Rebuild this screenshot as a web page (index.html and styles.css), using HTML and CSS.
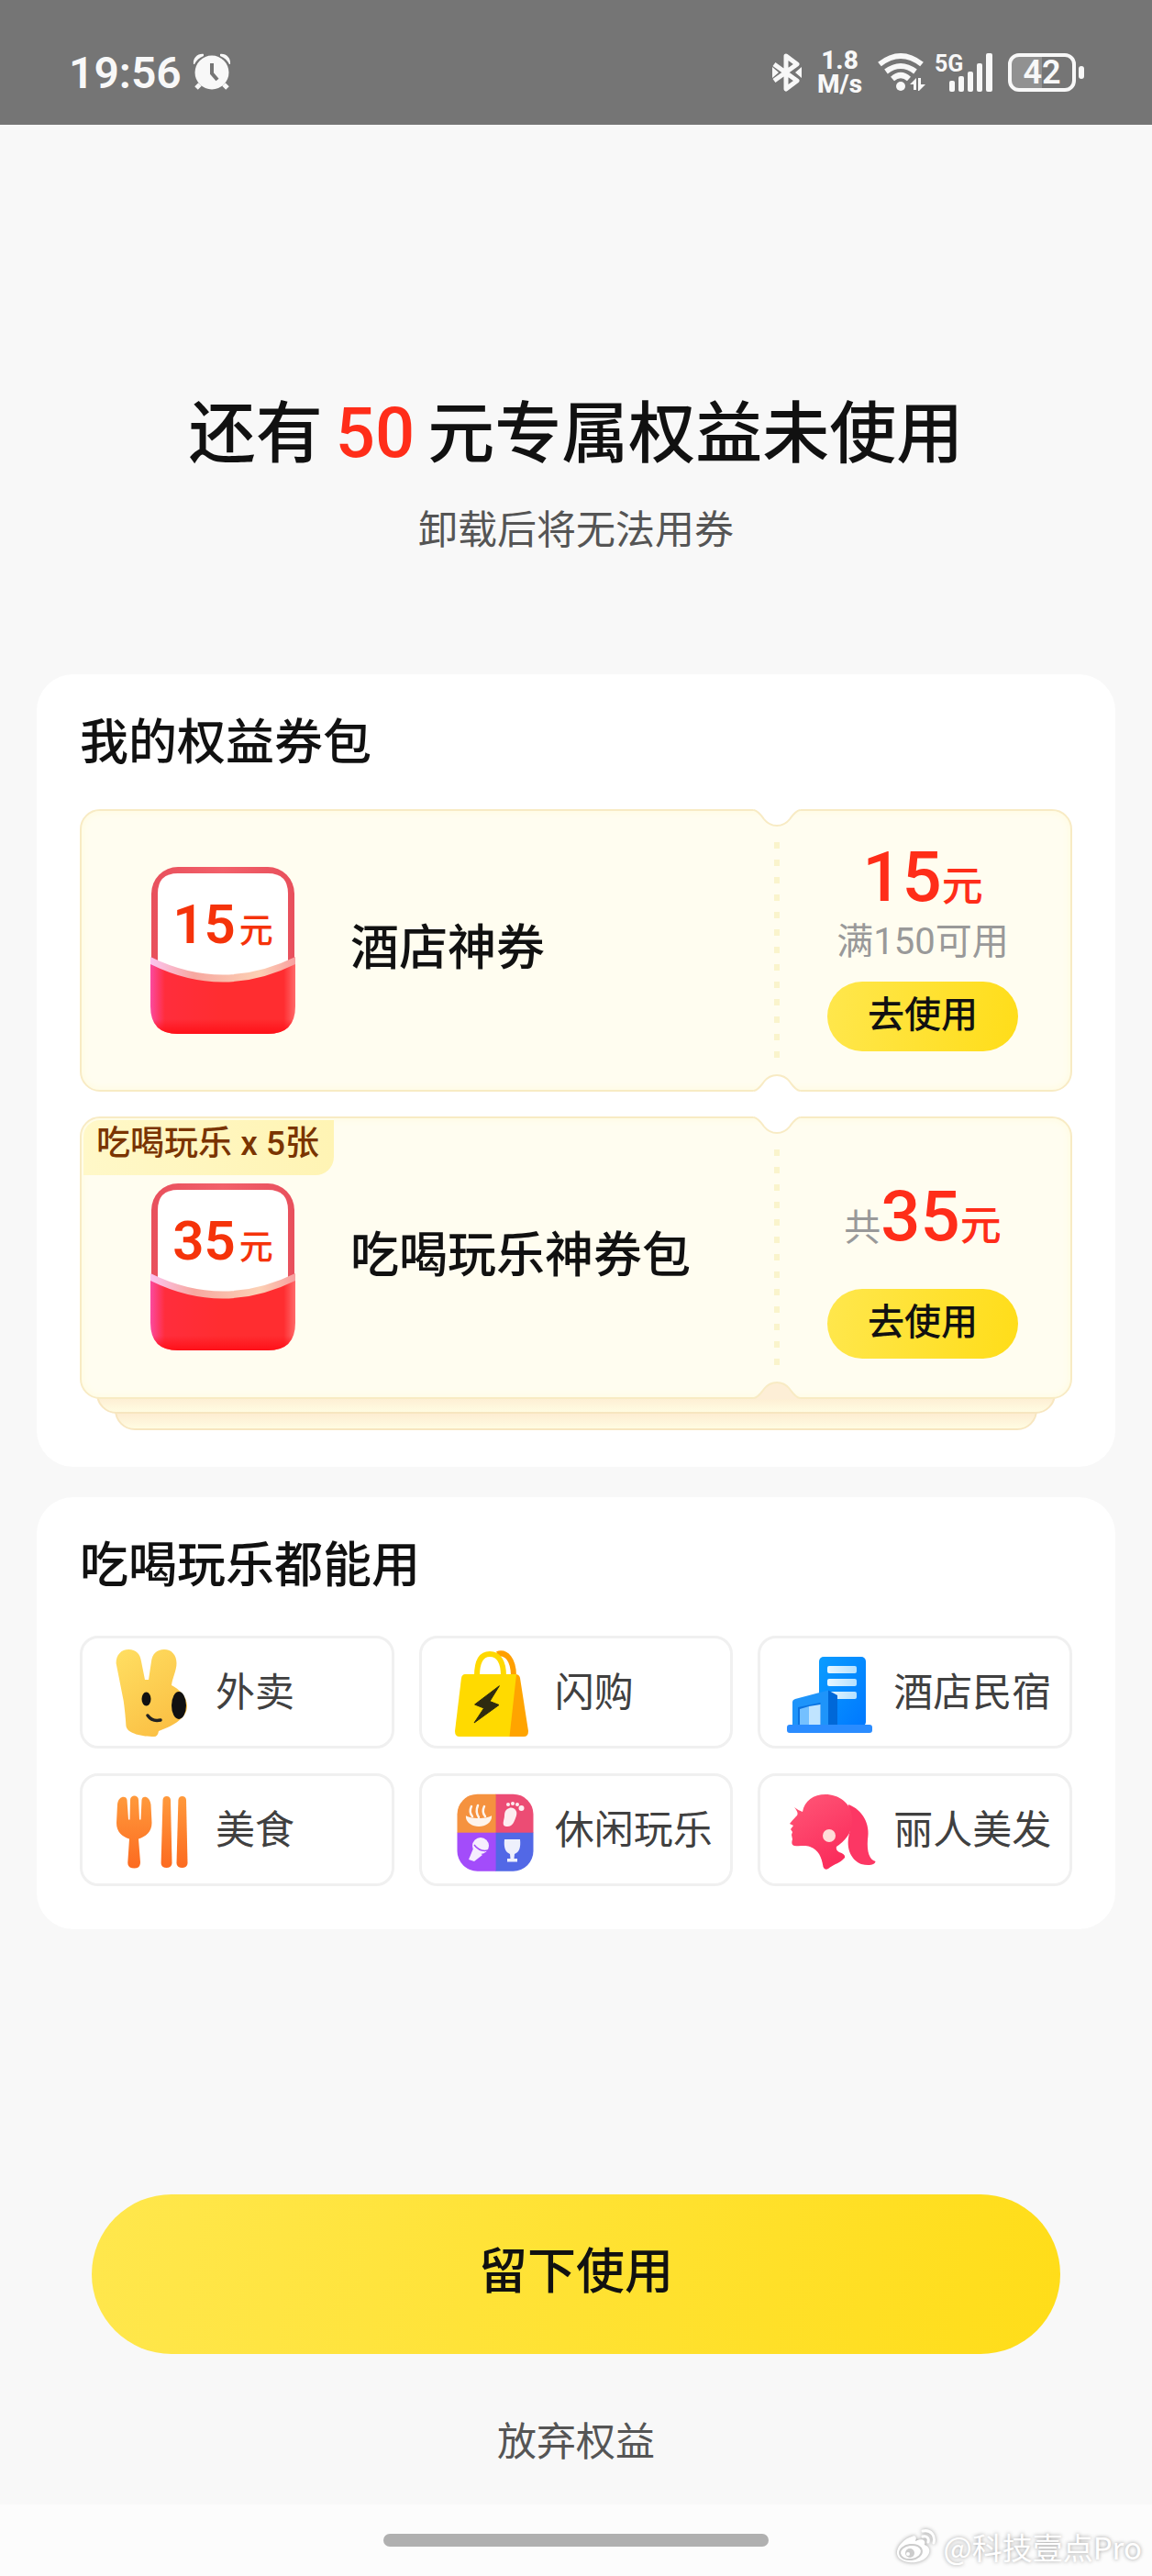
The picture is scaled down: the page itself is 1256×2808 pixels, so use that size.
FILE: index.html
```html
<!DOCTYPE html>
<html lang="zh-CN">

<head>
  <meta charset="UTF-8">
  <meta name="viewport" content="width=device-width, initial-scale=1.0">
  <title>专属权益</title>
  <link rel="stylesheet" href="styles.css">
</head>

<body>
  <div class="status-bar">
    <div class="status-left">
      <span class="time">19:56</span>
      <svg width="42" height="42" viewBox="0 0 42 42" fill="#f8f8f8">
        <circle cx="21" cy="21" r="18.5" />
        <path d="M1 12C0 5 6 0 12 1L12 3C7 5 4 8 2 12Z" />
        <path d="M41 12C42 5 36 0 30 1L30 3C35 5 38 8 40 12Z" />
        <path d="M8 34L4 38M34 34L38 38" stroke="#f8f8f8" stroke-width="5" />
        <path d="M21 11V22L27 29" fill="none" stroke="#757575" stroke-width="4" />
      </svg>
    </div>
    <div class="status-right">
      <svg width="32" height="42" viewBox="0 0 32 42">
        <path d="M2 12L27 30L15 39V3L27 12L2 30" fill="none" stroke="#f8f8f8" stroke-width="5" stroke-linejoin="round" />
        <path d="M0 15L7 21L0 27ZM32 15L25 21L32 27Z" fill="#f8f8f8" />
      </svg>
      <p class="speed">1.8<br>M/s</p>
      <svg class="wifi" width="52" height="42" viewBox="0 0 52 42">
        <g fill="none" stroke="#f8f8f8" stroke-width="6">
          <path d="M2 12Q25 -6 48 12" />
          <path d="M9 20Q25 8 41 20" />
          <path d="M16 28Q25 20 34 28" />
        </g>
        <circle cx="25" cy="36" r="5" fill="#f8f8f8" />
        <path d="M35 34L42 27V40H39V34ZM44 27H47V34H52L45 41H44Z" fill="#f8f8f8" />
      </svg>
      <svg class="signal" width="62" height="42" viewBox="0 0 62 42" fill="#f8f8f8">
        <text class="signal-text" x="-1" y="20">5G</text>
        <rect x="15" y="30" width="6" height="12" rx="2" />
        <rect x="25" y="25" width="6" height="17" rx="2" />
        <rect x="35" y="20" width="6" height="22" rx="2" />
        <rect x="45" y="11" width="6" height="31" rx="2" />
        <rect x="55" y="0" width="7" height="42" rx="2" />
      </svg>
      <div class="battery">
        <span class="battery-level">42</span>
      </div>
    </div>
  </div>

  <header class="header">
    <h1>还有<span class="amount">50</span>元专属权益未使用</h1>
    <p>卸载后将无法用券</p>
  </header>

  <main class="main">
    <section class="card">
      <h2>我的权益券包</h2>

      <div class="ticket">
        <svg class="notch notch-top" viewBox="0 0 52 20">
          <path class="notch-fill" d="M0 0L2 1C6 2 9 7 12 11C16 16 21 18 26 18C31 18 36 16 40 11C43 7 46 2 50 1L52 0Z" />
          <path class="notch-line" d="M1 1C6 2 9 7 12 11C16 16 21 18 26 18C31 18 36 16 40 11C43 7 46 2 51 1" />
        </svg>
        <svg class="notch notch-bottom" viewBox="0 0 52 20">
          <path class="notch-fill" d="M0 0L2 1C6 2 9 7 12 11C16 16 21 18 26 18C31 18 36 16 40 11C43 7 46 2 50 1L52 0Z" />
          <path class="notch-line" d="M1 1C6 2 9 7 12 11C16 16 21 18 26 18C31 18 36 16 40 11C43 7 46 2 51 1" />
        </svg>
        <div class="ticket-info">
          <div class="packet">
            <svg width="158" height="182" viewBox="0 0 158 182">
              <defs>
                <linearGradient id="rim" x1="0" x2="1">
                  <stop offset="0" stop-color="#e8505c" />
                  <stop offset="0.5" stop-color="#f2606a" />
                  <stop offset="1" stop-color="#e8505c" />
                </linearGradient>
                <linearGradient id="pocket" x1="0" x2="1">
                  <stop offset="0" stop-color="#fb4aa0" />
                  <stop offset="0.1" stop-color="#ff2d3c" />
                  <stop offset="0.5" stop-color="#ff2d30" />
                  <stop offset="0.92" stop-color="#ff2d30" />
                  <stop offset="1" stop-color="#ff6a6a" />
                </linearGradient>
                <linearGradient id="shade" x1="0" x2="0" y1="0" y2="1">
                  <stop offset="0.8" stop-color="#ff1018" stop-opacity="0" />
                  <stop offset="1" stop-color="#ff1018" />
                </linearGradient>
                <linearGradient id="lip" x1="0" x2="1">
                  <stop offset="0" stop-color="#fbc4f0" />
                  <stop offset="0.3" stop-color="#f7a8a0" />
                  <stop offset="0.75" stop-color="#fcd0b4" />
                  <stop offset="1" stop-color="#f8a0a0" />
                </linearGradient>
              </defs>
              <rect x="1" width="156" height="150" rx="29" fill="url(#rim)" />
              <path d="M8 29Q8 7 30 7H128Q150 7 150 29V120H8Z" fill="#fff" />
              <path d="M0 102Q79 142 158 102V152Q158 182 128 182H30Q0 182 0 152Z" fill="url(#pocket)" />
              <path d="M0 102Q79 142 158 102V152Q158 182 128 182H30Q0 182 0 152Z" fill="url(#shade)" />
              <path d="M0 98Q79 137 158 98V106Q79 145 0 106Z" fill="url(#lip)" />
            </svg>
            <span class="packet-text">15<small>元</small></span>
          </div>
          <h3>酒店神券</h3>
        </div>
        <div class="ticket-side">
          <p class="price">15<small>元</small></p>
          <p class="condition">满150可用</p>
          <button class="use">去使用</button>
        </div>
      </div>

      <div class="stack">
        <div class="ticket">
          <svg class="notch notch-top" viewBox="0 0 52 20">
            <path class="notch-fill" d="M0 0L2 1C6 2 9 7 12 11C16 16 21 18 26 18C31 18 36 16 40 11C43 7 46 2 50 1L52 0Z" />
            <path class="notch-line" d="M1 1C6 2 9 7 12 11C16 16 21 18 26 18C31 18 36 16 40 11C43 7 46 2 51 1" />
          </svg>
          <svg class="notch notch-bottom" viewBox="0 0 52 20">
            <path class="notch-peach" d="M0 0L2 1C6 2 9 7 12 11C16 16 21 18 26 18C31 18 36 16 40 11C43 7 46 2 50 1L52 0Z" />
            <path class="notch-line" d="M1 1C6 2 9 7 12 11C16 16 21 18 26 18C31 18 36 16 40 11C43 7 46 2 51 1" />
          </svg>
          <span class="tag">吃喝玩乐 x 5张</span>
          <div class="ticket-info has-tag">
            <div class="packet">
              <svg width="158" height="182" viewBox="0 0 158 182">
                <rect x="1" width="156" height="150" rx="29" fill="url(#rim)" />
                <path d="M8 29Q8 7 30 7H128Q150 7 150 29V120H8Z" fill="#fff" />
                <path d="M0 102Q79 142 158 102V152Q158 182 128 182H30Q0 182 0 152Z" fill="url(#pocket)" />
                <path d="M0 102Q79 142 158 102V152Q158 182 128 182H30Q0 182 0 152Z" fill="url(#shade)" />
                <path d="M0 98Q79 137 158 98V106Q79 145 0 106Z" fill="url(#lip)" />
              </svg>
              <span class="packet-text">35<small>元</small></span>
            </div>
            <h3>吃喝玩乐神券包</h3>
          </div>
          <div class="ticket-side">
            <p class="price total"><span class="prefix">共</span>35<small>元</small></p>
            <button class="use">去使用</button>
          </div>
        </div>
        <div class="layer layer-1"></div>
        <div class="layer layer-2"></div>
      </div>
    </section>

    <section class="card">
      <h2>吃喝玩乐都能用</h2>
      <div class="services">
        <a href="#" class="service">
          <svg viewBox="0 0 90 100">
            <defs>
              <linearGradient id="bunny" x1="0" x2="0.6" y1="0" y2="1">
                <stop offset="0" stop-color="#ffdf62" />
                <stop offset="1" stop-color="#fbc044" />
              </linearGradient>
            </defs>
            <path d="M6.600 18C6.600 9 12 3 20.400 3C28 3 33 8 34 16L38 36H42L45 16C46 8 51 3 59 3C67 3 72.500 9 72.500 18C72.500 26 68 34 67 42C75 46 84 54 84 65C84 77 70 86 53 92Q52 98 48 98C36 98 18 95 17.400 86C17 78 16 68 14.700 59Z" fill="url(#bunny)" />
            <ellipse cx="39.500" cy="57" rx="5" ry="7.500" fill="#111" />
            <ellipse cx="75" cy="64" rx="8" ry="15" fill="#111" />
            <path d="M41 75Q46 82 55 80" fill="none" stroke="#222" stroke-width="3.500" stroke-linecap="round" />
          </svg>
          <span>外卖</span>
        </a>
        <a href="#" class="service">
          <svg viewBox="0 0 90 100">
            <path d="M52 8C62 5 70 14 70 32" fill="none" stroke="#ff9f00" stroke-width="6" />
            <path d="M30 32C30 14 36 8 44 8C53 8 59 16 59 32" fill="none" stroke="#ffd900" stroke-width="6" />
            <path d="M65 30H72Q76 30 77 34L86 92Q86 98 81 98H62Z" fill="#ffa400" />
            <path d="M17 30H73L65.500 98H11Q6 98 6 92L13 34Q14 30 17 30Z" fill="#ffda00" />
            <path d="M54.400 42.700L27.600 63L37.600 67L27 83L54 63.500L44 59.500Z" fill="#2e2a10" stroke="#2e2a10" stroke-linejoin="round" />
          </svg>
          <span>闪购</span>
        </a>
        <a href="#" class="service">
          <svg viewBox="0 0 90 100">
            <defs>
              <linearGradient id="tower" x1="0" x2="1" y1="0" y2="1">
                <stop offset="0" stop-color="#0a9cff" />
                <stop offset="1" stop-color="#0078ff" />
              </linearGradient>
              <linearGradient id="pane" x1="0" x2="1">
                <stop offset="0" stop-color="#e8f7ff" />
                <stop offset="1" stop-color="#b4e0ff" />
              </linearGradient>
            </defs>
            <rect x="34" y="11" width="51" height="76" rx="5" fill="url(#tower)" />
            <rect x="43" y="21" width="32" height="8" rx="2" fill="url(#pane)" />
            <rect x="43" y="35" width="32" height="8" rx="2" fill="url(#pane)" />
            <rect x="43" y="49" width="32" height="8" rx="2" fill="url(#pane)" />
            <path d="M44 47.500L54 53V86H44Z" fill="#0068d8" />
            <path d="M5 60Q5 58 8 57L44 47.500V86H5Z" fill="#1e94fa" />
            <path d="M11 66L35.500 61V86H11Z" fill="#0a72e0" />
            <path d="M13 68L23 65V86H13Z" fill="#74c0ff" />
            <path d="M23 65L35.500 63V86H23Z" fill="#c0e4ff" />
            <rect x="-1" y="85" width="93" height="9" rx="3" fill="#2a8cff" />
          </svg>
          <span>酒店民宿</span>
        </a>
        <a href="#" class="service">
          <svg viewBox="0 0 90 100">
            <defs>
              <linearGradient id="food" x1="0" x2="0" y1="12" y2="92" gradientUnits="userSpaceOnUse">
                <stop offset="0" stop-color="#ff9a3c" />
                <stop offset="1" stop-color="#fc6a20" />
              </linearGradient>
            </defs>
            <g fill="url(#food)">
              <path d="M8 22C9 12 18 12 18.500 17L20 38.500H21.500L22 17C22 11 31 11 31 17L32 38.500H33.500L34.500 17C35 12 43 12 44.500 22L45.500 42C45.500 52 39 57 31 59.500L33 85Q33 91.500 26.500 91.500Q19 91.500 19.300 85L21 59.500C13 57 7 52 7 42Z" />
              <path d="M57.500 17Q58 13 61.700 13Q65.500 13 66 17L67.500 86Q67 91 61.500 91Q56 91 55.600 86Z" />
              <path d="M74.400 17Q75 13 78.600 13Q82.500 13 83 17L84.500 86Q84 91 78.500 91Q73 91 72.500 86Z" />
            </g>
          </svg>
          <span>美食</span>
        </a>
        <a href="#" class="service">
          <svg viewBox="0 0 90 100">
            <defs>
              <clipPath id="tile">
                <rect x="8.500" y="10.700" width="83" height="84" rx="22" />
              </clipPath>
            </defs>
            <g clip-path="url(#tile)">
              <rect x="8" y="10" width="43" height="43" fill="#f5923f" />
              <rect x="50.600" y="10" width="42" height="43" fill="#ec4c74" />
              <rect x="8" y="52.700" width="43" height="43" fill="#a34cfa" />
              <rect x="50.600" y="52.700" width="42" height="43" fill="#5268e6" />
            </g>
            <g fill="#fff" opacity="0.9">
              <path d="M18 34C22 38 42 38 46 34C47 41 40 46 32 46C24 46 17 41 18 34Z" />
              <path d="M25 35Q21 30 24 24M32 36Q28 30 31 23M39 35Q35 30 38 24" fill="none" stroke="#fff" stroke-width="2.500" stroke-linecap="round" />
              <path d="M63 27C68 23 75 27 73 34C71 40 69 47 62 46C56 45 60 39 60 34Q60 29 63 27Z" />
              <circle cx="64" cy="22" r="2" />
              <circle cx="69" cy="21" r="2" />
              <circle cx="74" cy="22" r="2" />
              <circle cx="78.500" cy="26" r="3" />
              <circle cx="34" cy="67" r="9" />
              <path d="M26 70L36 77L27 84L21 82Z" />
              <path d="M60 60H77C78 69 76 74 71 76L70.500 81H74V84.500H63V81H66.500L66 76C61 74 59 69 60 60Z" />
            </g>
            <path d="M27 66Q33 74 42 72" fill="none" stroke="#a34cfa" stroke-width="1.500" />
          </svg>
          <span>休闲玩乐</span>
        </a>
        <a href="#" class="service">
          <svg viewBox="0 0 90 100">
            <defs>
              <linearGradient id="lady" x1="0" x2="0.500" y1="0" y2="1">
                <stop offset="0" stop-color="#ff5878" />
                <stop offset="1" stop-color="#fb2d5c" />
              </linearGradient>
            </defs>
            <path d="M66 22C82 28 90 44 87 60C86 74 89 82 95.500 84C95 88 88 89 80 87C68 82 62 68 68 50Z" fill="#fc3764" />
            <path d="M41 11C55 11 69 20 70 36C72 52 62 62 53 68Q52 72 56 74Q63 76 62 80C57 86 50 87 44 92Q40 94 38.500 90C37 80 34 72 24 68C18 66 14 68 7 67Q3 66 5 60L4 55L5 52L3 49L6 45L2 43C6 38 8 36 10 34Q12 31 7 25Q12 29 16 30C18 18 28 11 41 11Z" fill="url(#lady)" />
            <circle cx="45" cy="56" r="7" fill="#ffdcd8" />
          </svg>
          <span>丽人美发</span>
        </a>
      </div>
    </section>
  </main>

  <footer class="footer">
    <button class="stay">留下使用</button>
    <a href="#" class="leave">放弃权益</a>
  </footer>

  <div class="nav-bar">
    <div class="handle"></div>
    <div class="watermark">
      <svg width="46" height="40" viewBox="0 0 46 40">
        <path d="M18 9C22 7 24 10 22 14C28 11 34 12 32 18C37 20 39 24 36 29C32 36 22 38 15 37C6 36 1 31 2 25C3 18 11 11 18 9Z" fill="#fff" />
        <ellipse cx="17" cy="26" rx="12" ry="8" fill="none" stroke="#ccc" stroke-width="2" transform="rotate(-8 17 26)" />
        <circle cx="16" cy="27" r="5" fill="#ccc" />
        <circle cx="14" cy="28" r="2" fill="#fff" />
        <path d="M30 3C39 1 44 8 42 16M30 9C35 8 37 11 36 15" fill="none" stroke="#fff" stroke-width="3" stroke-linecap="round" />
      </svg>
      <span>@科技壹点Pro</span>
    </div>
  </div>
</body>

</html>
```
FILE: styles.css
```css
* {
  margin: 0;
  padding: 0;
  box-sizing: border-box;
}

body {
  min-height: 100vh;
  display: flex;
  flex-direction: column;
  background-color: #f8f8f8;
  color: #111;
  font-family: Roboto, "Noto Sans CJK SC", sans-serif;
}

a {
  color: inherit;
  text-decoration: none;
}

button {
  border: none;
  cursor: pointer;
  color: #111;
  font-family: inherit;
  font-weight: 500;
  background: linear-gradient(100deg, #ffe74d, #ffdd19);
}

svg {
  display: block;
  flex-shrink: 0;
  overflow: visible;
}

/* status bar */
.status-bar {
  height: 136px;
  padding: 22px 74px 0 75px;
  display: flex;
  justify-content: space-between;
  align-items: center;
  background-color: #757575;
  color: #f8f8f8;
}

.status-left,
.status-right {
  display: flex;
  align-items: center;
}

.status-left {
  gap: 12px;
}

.status-right {
  gap: 17px;
}

.time {
  font-size: 48px;
  font-weight: 600;
}

.speed {
  text-align: center;
  font-size: 28px;
  font-weight: 800;
  line-height: 26px;
}

.wifi {
  margin-right: -6px;
}

.signal-text {
  font-size: 25px;
  font-weight: 700;
}

.battery {
  position: relative;
  width: 74px;
  height: 42px;
  margin-right: 9px;
  border: 4px solid #f8f8f8;
  border-radius: 12px;
  background: linear-gradient(90deg, #919191 50%, #757575 50%);
  text-align: center;
}

.battery::after {
  content: "";
  position: absolute;
  right: -13px;
  top: 10px;
  width: 6px;
  height: 14px;
  border-radius: 3px;
  background-color: #f8f8f8;
}

.battery-level {
  display: block;
  font-size: 36px;
  font-weight: 600;
  line-height: 34px;
}

/* page title */
.header {
  padding-top: 286px;
  text-align: center;
}

.header h1 {
  font-size: 73px;
  font-weight: 500;
  line-height: 100px;
}

.amount {
  margin: 0 14px;
  font-size: 76px;
  color: #ff2d19;
}

.header p {
  margin-top: 25px;
  font-size: 43px;
  line-height: 60px;
  color: #555;
}

/* cards */
.main {
  padding: 127px 40px 0;
  display: flex;
  flex-direction: column;
  gap: 33px;
}

.card {
  padding: 45px 47px 40px;
  border-radius: 40px;
  background-color: #fff;
}

.card h2 {
  margin-bottom: 42px;
  font-size: 53px;
  font-weight: 500;
  line-height: 60px;
}

.ticket {
  position: relative;
  z-index: 2;
  height: 308px;
  display: flex;
  border: 2px solid #f8ebc4;
  border-radius: 22px;
  background-color: #fffdf0;
  box-shadow: inset 0 0 8px #fffbdc;
}

.notch {
  position: absolute;
  right: 294px;
  width: 52px;
  height: 20px;
}

.notch-top {
  top: -2px;
}

.notch-bottom {
  bottom: -2px;
  transform: scaleY(-1);
}

.notch-fill {
  fill: #fff;
}

.notch-peach {
  fill: #fdeed6;
}

.notch-line {
  fill: none;
  stroke: #f8ebc4;
  stroke-width: 2;
}

.ticket-info {
  flex: 1;
  padding-left: 75px;
  display: flex;
  align-items: center;
  gap: 60px;
}

.ticket-info h3 {
  padding-bottom: 4px;
  font-size: 53px;
  font-weight: 500;
  line-height: 60px;
}

.has-tag .packet {
  margin-top: 20px;
}

.packet {
  position: relative;
}

.packet-text {
  position: absolute;
  left: 0;
  top: 28px;
  width: 100%;
  text-align: center;
  font-size: 60px;
  font-weight: 600;
  line-height: 70px;
  color: #f5330a;
}

.packet-text small {
  margin-left: 4px;
  font-size: 37px;
  font-weight: 500;
}

.tag {
  position: absolute;
  left: 2px;
  top: 2px;
  height: 60px;
  padding: 0 16px 0 14px;
  border-radius: 18px 0 20px 0;
  background: linear-gradient(90deg, #fff8c8, #fff4b4);
  font-size: 37px;
  font-weight: 500;
  line-height: 52px;
  color: #7a3400;
}

.ticket-side {
  width: 322px;
  padding: 0 0 42px;
  display: flex;
  flex-direction: column;
  align-items: center;
  justify-content: flex-end;
  position: relative;
}

/* dotted tear line between the notches */
.ticket-side::before {
  content: "";
  position: absolute;
  left: -1px;
  top: 34px;
  bottom: 34px;
  width: 6px;
  background: repeating-linear-gradient(#faf4cc 0 7px, transparent 7px 19px);
}

.price {
  margin-bottom: 8px;
  font-size: 76px;
  font-weight: 500;
  line-height: 76px;
  color: #ff2d19;
}

.price small,
.prefix {
  line-height: 40px;
}

.price small {
  font-size: 45px;
}

.total {
  margin-bottom: 41px;
}

.prefix {
  font-size: 40px;
  font-weight: 400;
  color: #999;
}

.condition {
  margin-bottom: 18px;
  font-size: 40px;
  line-height: 50px;
  color: #999;
}

.use {
  width: 208px;
  height: 76px;
  border-radius: 38px;
  font-size: 40px;
  line-height: 74px;
  padding-bottom: 2px;
}

.stack {
  margin-top: 27px;
}

.layer {
  position: relative;
  height: 40px;
  border: 2px solid #f7e6c0;
  border-radius: 0 0 22px 22px;
  background: linear-gradient(#fdebd0 50%, #fffce2);
}

.layer-1 {
  z-index: 1;
  margin: -24px 18px 0;
}

.layer-2 {
  margin: -22px 38px 0;
}

/* services */
.services {
  padding: 4px 0 7px;
  display: grid;
  grid-template-columns: repeat(3, 1fr);
  gap: 27px;
}

.service {
  height: 123px;
  padding-left: 30px;
  display: flex;
  align-items: center;
  gap: 25px;
  border: 3px solid #f0f0f0;
  border-radius: 20px;
  font-size: 43px;
  line-height: 60px;
  color: #404040;
  white-space: nowrap;
}

.service svg {
  width: 90px;
  height: 100px;
}

/* bottom actions */
.footer {
  margin-top: auto;
  padding: 40px 100px 38px;
  display: flex;
  flex-direction: column;
  align-items: center;
  gap: 66px;
}

.stay {
  width: 100%;
  height: 174px;
  padding-bottom: 4px;
  border-radius: 87px;
  font-size: 53px;
  line-height: 60px;
}

.leave {
  font-size: 43px;
  line-height: 60px;
  color: #555;
}

.nav-bar {
  position: relative;
  height: 78px;
  display: flex;
  justify-content: center;
  align-items: center;
  background-color: #fcfcfc;
}

.handle {
  width: 420px;
  height: 14px;
  border-radius: 7px;
  background-color: #b0b0b0;
}

.watermark {
  position: absolute;
  right: 11px;
  bottom: 10px;
  display: flex;
  align-items: center;
  gap: 6px;
  font-family: "Noto Sans CJK SC", sans-serif;
  font-size: 33px;
  line-height: 44px;
  color: #fff;
  text-shadow: 0 0 4px #999;
}

.watermark svg {
  filter: drop-shadow(0 0 2px #999);
}
```
